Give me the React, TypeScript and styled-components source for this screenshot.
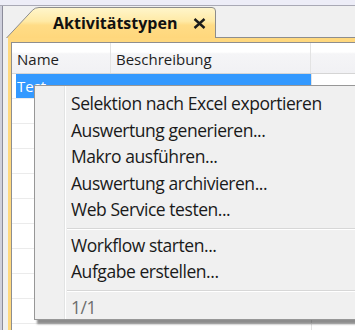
import React from "react";
import { styled, createGlobalStyle } from "styled-components";

const GlobalStyle = createGlobalStyle`
  html, body {
    margin: 0;
    padding: 0;
    background: #f0f0f0;
    overflow: hidden;
  }
  body {
    font-family: "Open Sans", "Noto Sans", sans-serif;
  }
`;

const Screen = styled.div`
  position: relative;
  width: 355px;
  height: 330px;
  overflow: hidden;
  display: flex;
  flex-direction: column;
`;

const TopBar = styled.div`
  height: 5px;
  flex-shrink: 0;
  background: #ededf7;
  border-bottom: 1px solid #a9a9b5;
`;

const Body = styled.div`
  flex: 1;
  display: flex;
  min-height: 0;
`;

const LeftEdge = styled.div`
  width: 2px;
  background: #cfd0dc;
  border-right: 1px solid #8c8c9a;
`;

const Workspace = styled.div`
  flex: 1;
  min-width: 0;
  display: flex;
  flex-direction: column;
  background: #f0f0f0;
`;

const TabRow = styled.div`
  display: flex;
  align-items: flex-end;
  height: 32px;
  flex-shrink: 0;
`;

const Tab = styled.div`
  position: relative;
  box-sizing: border-box;
  width: 210px;
  height: 31px;
  margin-left: 3px;
  flex-shrink: 0;
  display: flex;
  align-items: center;
  justify-content: space-between;
  padding: 0 10px 0 47px;
`;

const TabShape = styled.svg`
  position: absolute;
  inset: 0;
  width: 100%;
  height: 100%;
`;

const TabLabel = styled.span`
  position: relative;
  font-size: 16px;
  font-weight: 700;
  color: #111;
  padding-top: 1px;
`;

const CloseIcon = styled.svg`
  position: relative;
  width: 13px;
  height: 11px;
  margin-top: 1px;
`;

const TabFiller = styled.div`
  flex: 1;
  height: 32px;
  box-sizing: border-box;
  border-bottom: 1px solid #8e8e8e;
`;

const Frame = styled.div`
  flex: 1;
  display: flex;
  margin-left: 5px;
  padding: 4px 0 0 3px;
  background: #ffd87e;
  min-height: 0;
`;

const Content = styled.div`
  flex: 1;
  background: #fff;
  border-top: 1px solid #8e8e8e;
  border-left: 1px solid #8e8e8e;
  overflow: hidden;
  font-size: 15px;
  color: #1e1e1e;
`;

const HeaderRow = styled.div`
  display: flex;
  height: 30px;
  border-bottom: 1px solid #d5d5d5;
  background: linear-gradient(#ffffff 0%, #ffffff 30%, #f5f5f7 36%, #f1f1f4 100%);
`;

const HeaderCell = styled.div<{ $width?: number }>`
  box-sizing: border-box;
  width: ${(p) => (p.$width ? `${p.$width}px` : "auto")};
  flex: ${(p) => (p.$width ? "none" : "1")};
  border-right: ${(p) => (p.$width ? "1px solid #e3e3e3" : "none")};
  padding: 3px 0 0 5px;
  line-height: 27px;
  white-space: nowrap;
`;

const Row = styled.div`
  display: flex;
  height: 25px;
  box-sizing: border-box;
  border-bottom: 1px solid #ebebeb;
`;

const Indent = styled.div`
  width: 4px;
`;

const Cell = styled.div<{ $width: number; $selected?: boolean; $line?: boolean }>`
  width: ${(p) => p.$width}px;
  background: ${(p) => (p.$selected ? "#3399ff" : "transparent")};
  color: ${(p) => (p.$selected ? "#fff" : "#1e1e1e")};
  border-right: ${(p) => (p.$line ? "1px solid #e3e3e3" : "none")};
  padding-left: 1px;
  box-sizing: border-box;
  line-height: 24px;
  white-space: nowrap;
  overflow: hidden;
`;

const Menu = styled.div`
  position: absolute;
  left: 34px;
  top: 85px;
  width: 340px;
  height: 235px;
  box-sizing: border-box;
  padding-top: 4px;
  border: 1px solid #979797;
  background:
    linear-gradient(
      to right,
      transparent 29px,
      #e2e3e3 29px,
      #e2e3e3 30px,
      #ffffff 30px,
      #ffffff 31px,
      transparent 31px
    ),
    #f0f0f0;
  box-shadow: 3px 4px 2px rgba(0, 0, 0, 0.45);
  overflow: hidden;
`;

const MenuItem = styled.div<{ $disabled?: boolean }>`
  height: 26.5px;
  line-height: 26.5px;
  padding-left: 36px;
  font-size: 17.5px;
  letter-spacing: -0.45px;
  color: ${(p) => (p.$disabled ? "#6d6d6d" : "#1a1a1a")};
  white-space: nowrap;
`;

const MenuSeparator = styled.div`
  margin: 5px 0 2px 32px;
  border-top: 1px solid #d7d7d7;
  border-bottom: 1px solid #ffffff;
`;

const menuGroups = [
  [
    "Selektion nach Excel exportieren",
    "Auswertung generieren...",
    "Makro ausführen...",
    "Auswertung archivieren...",
    "Web Service testen...",
  ],
  ["Workflow starten...", "Aufgabe erstellen..."],
];

const rows = Array.from({ length: 11 }, (_, i) => (i === 0 ? "Test" : ""));

const App = () => {
  return (
    <React.Fragment>
      <GlobalStyle />
      <Screen>
        <TopBar />
        <Body>
          <LeftEdge />
          <Workspace>
            <TabRow>
              <Tab>
                <TabShape viewBox="0 0 210 31" preserveAspectRatio="none">
                  <defs>
                    <linearGradient id="tabFill" x1="0" y1="0" x2="0" y2="1">
                      <stop offset="0" stopColor="#fff6cc" />
                      <stop offset="0.45" stopColor="#ffeaa6" />
                      <stop offset="0.58" stopColor="#ffdc86" />
                      <stop offset="1" stopColor="#ffd77c" />
                    </linearGradient>
                  </defs>
                  <path
                    d="M0.5 31 L26.5 3.2 Q29 0.5 33 0.5 L206 0.5 Q209.5 0.5 209.5 4 L209.5 31"
                    fill="url(#tabFill)"
                    stroke="#8c8c8c"
                    strokeWidth="1"
                  />
                </TabShape>
                <TabLabel>Aktivitätstypen</TabLabel>
                <CloseIcon viewBox="0 0 13 11">
                  <path d="M1.5 1 L11.5 10 M11.5 1 L1.5 10" stroke="#1c1c1c" strokeWidth="2.4" />
                </CloseIcon>
              </Tab>
              <TabFiller />
            </TabRow>
            <Frame>
              <Content>
                <HeaderRow>
                  <HeaderCell $width={99}>Name</HeaderCell>
                  <HeaderCell $width={200}>Beschreibung</HeaderCell>
                  <HeaderCell />
                </HeaderRow>
                {rows.map((name, i) => (
                  <Row key={i}>
                    <Indent />
                    <Cell $width={94} $selected={i === 0}>
                      {name}
                    </Cell>
                    <Cell $width={202} $selected={i === 0} $line />
                  </Row>
                ))}
              </Content>
            </Frame>
          </Workspace>
        </Body>
        <Menu>
          {menuGroups.map((group, g) => (
            <React.Fragment key={g}>
              {group.map((label) => (
                <MenuItem key={label}>{label}</MenuItem>
              ))}
              <MenuSeparator />
            </React.Fragment>
          ))}
          <MenuItem $disabled>1/1</MenuItem>
        </Menu>
      </Screen>
    </React.Fragment>
  );
};

export default App;
